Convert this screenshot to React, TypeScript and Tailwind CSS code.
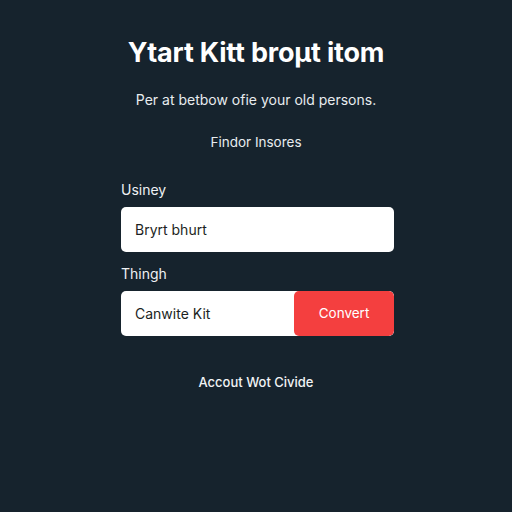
import React from "react";

const fields = [
  { label: "Usiney", value: "Bryrt bhurt" },
];

const App = () => {
  return (
    <div
      className="w-[512px] h-[512px] bg-[#16232d] text-white flex flex-col items-center"
      style={{ fontFamily: "Inter, 'Noto Sans', sans-serif" }}
    >
      <h1 className="mt-[36px] text-[27px] leading-[34px] font-bold tracking-[-0.2px]">
        Ytart Kitt broμt itom
      </h1>
      <p className="mt-[21px] text-[14px] leading-[18px] text-[#e8ecef]">
        Per at betbow ofie your old persons.
      </p>
      <p className="mt-[24px] text-[13.5px] leading-[18px] text-[#e8ecef]">
        Findor Insores
      </p>

      <div className="mt-[30px] ml-[3px] w-[273px] flex flex-col">
        {fields.map((f) => (
          <div key={f.label} className="flex flex-col">
            <label className="text-[14px] leading-[18px] text-[#eef1f3]">{f.label}</label>
            <div className="mt-[8px] h-[45px] rounded-[5px] bg-white flex items-center px-[14px] text-[14px] text-[#1c1f23]">
              {f.value}
            </div>
          </div>
        ))}

        <label className="mt-[13px] text-[14px] leading-[18px] text-[#eef1f3]">Thingh</label>
        <div className="mt-[8px] h-[45px] rounded-[5px] bg-white flex overflow-hidden">
          <div className="flex-1 flex items-center px-[14px] text-[14px] text-[#1c1f23]">
            Canwite Kit
          </div>
          <button className="w-[100px] bg-[#f43f3f] text-white text-[13.5px] rounded-[5px]">
            Convert
          </button>
        </div>
      </div>

      <p className="mt-[37px] text-[13px] leading-[18px] font-medium text-[#f1f3f5]">
        Accout Wot Civide
      </p>
    </div>
  );
};

export default App;
